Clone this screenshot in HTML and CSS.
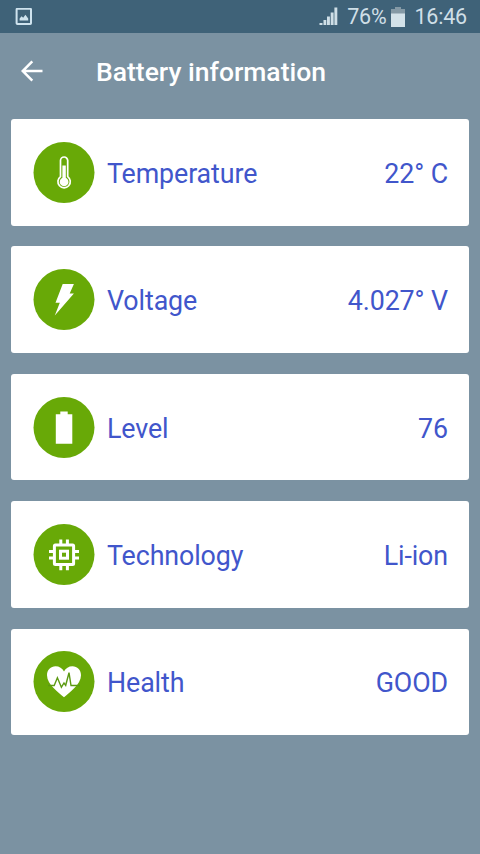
FILE: index.html
```html
<!DOCTYPE html>
<html lang="en">
  <head>
    <meta charset="UTF-8" />
    <meta name="viewport" content="width=device-width, initial-scale=1.0" />
    <title>Battery information</title>
    <link rel="stylesheet" href="styles.css">
  </head>
  <body>
    <div class="status-bar">
      <svg class="status-picture" width="17" height="18" viewBox="0 0 17 18">
        <rect x="1.6" y="0.8" width="14.4" height="15.2" rx="0.8" fill="none" stroke="#cfe3ee" stroke-width="2" />
        <path d="M4.6 12.4v-1.8l2-2.4 1.6 1.6 2.2-3 2.8 3.8v1.8z" fill="#cfe3ee" />
      </svg>
      <div class="status-right">
        <svg class="signal" width="20" height="19" viewBox="0 0 20 19" fill="#cfdfe7">
          <rect x="0.5" y="16" width="3" height="2" />
          <rect x="4.5" y="13" width="2.8" height="5" />
          <rect x="8" y="9.5" width="2.9" height="8.5" />
          <rect x="11.7" y="5.5" width="2.9" height="12.5" />
          <rect x="15.4" y="0.5" width="2.9" height="17.5" />
        </svg>
        <span class="percent">76%</span>
        <svg class="status-battery" width="14" height="20" viewBox="0 0 14 20">
          <path d="M4 0h6v2h4v5H0V2h4z" fill="#8499a5" />
          <rect y="6.5" width="14" height="13.5" fill="#d3e2e9" />
        </svg>
        <span class="time">16:46</span>
      </div>
    </div>

    <div class="header">
      <svg class="back" width="22" height="22" viewBox="0 0 22 22" fill="none" stroke="#fff" stroke-width="2.5">
        <path d="M11.3 1.3L1.7 11l9.6 9.7M2 11h19.5" />
      </svg>
      <h1>Battery information</h1>
    </div>

    <div class="list">
      <div class="card">
        <svg class="icon" viewBox="-0.5 0 62 61">
          <circle cx="30.5" cy="30.5" r="30.5" fill="#68a907" />
          <path d="M27 34.6V18.6a3.6 3.6 0 0 1 7.2 0v16a6.2 6.2 0 1 1-7.2 0z" fill="none" stroke="#fff" stroke-width="1.7" />
          <path d="M28.9 23.5h3.4v12.2a4.4 4.4 0 1 1-3.4 0z" fill="#fff" />
        </svg>
        <span class="label">Temperature</span>
        <span class="value">22° C</span>
      </div>

      <div class="card">
        <svg class="icon" viewBox="-0.5 0 62 61">
          <circle cx="30.5" cy="30.5" r="30.5" fill="#68a907" />
          <path d="M29.2 14.9h11.2l-4.2 9.7h4.2L21.3 46.6l5-12.9h-4.3z" fill="#fff" />
        </svg>
        <span class="label">Voltage</span>
        <span class="value">4.027° V</span>
      </div>

      <div class="card">
        <svg class="icon" viewBox="-0.5 0 62 61">
          <circle cx="30.5" cy="30.5" r="30.5" fill="#68a907" />
          <path d="M26.8 14.4h7.4v2.8h4.6v29.5H22.3V17.2h4.5z" fill="#fff" />
        </svg>
        <span class="label">Level</span>
        <span class="value">76</span>
      </div>

      <div class="card">
        <svg class="icon" viewBox="-0.5 0 62 61">
          <circle cx="30.5" cy="30.5" r="30.5" fill="#68a907" />
          <g fill="none" stroke="#fff" stroke-width="3">
            <rect x="20.9" y="21" width="19.2" height="19.4" rx="1" />
            <path d="M27.3 15.4v5M33.9 15.4v5M27.3 41v5.2M33.9 41v5.2M15.5 27.4h5M15.5 34h5M40.5 27.4h5M40.5 34h5" />
            <rect x="27" y="27.2" width="7" height="7" />
          </g>
        </svg>
        <span class="label">Technology</span>
        <span class="value">Li-ion</span>
      </div>

      <div class="card">
        <svg class="icon" viewBox="-0.5 0 62 61">
          <circle cx="30.5" cy="30.5" r="30.5" fill="#68a907" />
          <path d="M30.5 46.3C25.5 41.5 13.5 33.8 13.5 24.2c0-5.2 3.8-8.9 8.5-8.9 3.8 0 6.8 2 8.5 5.2 1.7-3.2 4.7-5.2 8.5-5.2 4.7 0 8.5 3.7 8.5 8.9 0 9.6-12 17.3-17 22.1z" fill="#fff" />
          <path d="M14.5 34.5h6.2l3.2-7.7 4 9.4 2.6-4.2 1.7 2.3 3.3-12.6 2 12.8h9" fill="none" stroke="#5c9a12" stroke-width="1.4" />
        </svg>
        <span class="label">Health</span>
        <span class="value">GOOD</span>
      </div>
    </div>
  </body>
</html>
```

FILE: styles.css
```css
body {
  margin: 0;
  height: 854px;
  background: #7b92a2;
  font-family: Roboto, "Liberation Sans", sans-serif;
  overflow: hidden;
}
.status-bar {
  height: 33px;
  box-sizing: border-box;
  padding: 0 13px 0 15px;
  background: #3f6278;
  color: #cfdfe7;
  display: flex;
  align-items: center;
  justify-content: space-between;
}
.status-right {
  display: flex;
  align-items: center;
  font-size: 21.5px;
  line-height: 33px;
  letter-spacing: -0.2px;
}
.percent {
  margin-left: 8px;
  margin-right: 5px;
}
.time {
  margin-left: 9px;
}
.header {
  height: 86px;
  box-sizing: border-box;
  padding: 0 21px 8px;
  display: flex;
  align-items: center;
}
.back {
  margin-bottom: 2px;
}
h1 {
  margin: 0 0 0 53px;
  color: #fff;
  font-size: 26.5px;
  font-weight: 500;
  line-height: 32px;
}
.list {
  padding: 0 11px;
  display: flex;
  flex-direction: column;
  gap: 20.9px;
}
.card {
  height: 106.5px;
  box-sizing: border-box;
  padding: 0 21px 0 22px;
  background: #fff;
  border-radius: 3px;
  color: #4156cb;
  font-size: 26.8px;
  line-height: 32px;
  letter-spacing: -0.1px;
  display: flex;
  align-items: center;
}
.icon {
  width: 62px;
  height: 61px;
  margin-right: 12px;
}
.label {
  flex: 1;
  padding-top: 3px;
}
.value {
  padding-top: 3px;
}
```
